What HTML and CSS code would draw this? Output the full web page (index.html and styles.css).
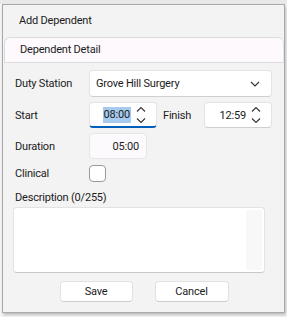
FILE: index.html
```html
<!DOCTYPE html>
<html>
<head>
<meta charset="utf-8">
<link rel="stylesheet" href="styles.css">
</head>
<body>
<div class="backdrop">
  <div class="dialog">
    <div class="title">Add Dependent</div>
    <div class="panel">Dependent Detail</div>
    <div class="content">
      <div class="row row-station">
        <span class="label">Duty Station</span>
        <div class="select">
          <span>Grove Hill Surgery</span>
          <svg class="chev" width="10" height="6" viewBox="0 0 10 6"><path d="M1 1 L5 5 L9 1" fill="none" stroke="#333" stroke-width="1.1"/></svg>
        </div>
      </div>
      <div class="row row-time">
        <span class="label">Start</span>
        <div class="time focused">
          <span class="val"><span class="sel">08:00</span></span>
          <svg class="spin" width="10" height="18" viewBox="0 0 10 18"><path d="M1 5.5 L5 1.5 L9 5.5" fill="none" stroke="#333" stroke-width="1.1"/><path d="M1 12.5 L5 16.5 L9 12.5" fill="none" stroke="#333" stroke-width="1.1"/></svg>
        </div>
        <span class="label-finish">Finish</span>
        <div class="time">
          <span class="val">12:59</span>
          <svg class="spin" width="10" height="18" viewBox="0 0 10 18"><path d="M1 5.5 L5 1.5 L9 5.5" fill="none" stroke="#333" stroke-width="1.1"/><path d="M1 12.5 L5 16.5 L9 12.5" fill="none" stroke="#333" stroke-width="1.1"/></svg>
        </div>
      </div>
      <div class="row row-duration">
        <span class="label">Duration</span>
        <div class="duration">05:00</div>
      </div>
      <div class="row row-clinical">
        <span class="label">Clinical</span>
        <div class="checkbox"></div>
      </div>
      <div class="desc-label">Description (0/255)</div>
      <div class="textarea"><div class="scroll"></div></div>
      <div class="buttons">
        <div class="btn btn-save">Save</div>
        <div class="btn btn-cancel">Cancel</div>
      </div>
    </div>
  </div>
</div>
</body>
</html>
```
FILE: styles.css
```css
html, body {
  margin: 0;
  padding: 0;
}
body {
  width: 287px;
  height: 317px;
  overflow: hidden;
  background: #f7f7f7;
  font-family: Roboto, "Noto Sans", sans-serif;
  font-size: 11px;
  letter-spacing: -0.2px;
  color: #1b1b1b;
}
.backdrop {
  padding: 4px 0 0 2px;
  background: linear-gradient(to bottom, #e9e9e9 0, #e9e9e9 4px, transparent 4px);
}
.dialog {
  width: 283px;
  height: 309px;
  box-sizing: border-box;
  border: 1px solid #a9a9a9;
  background: #f3f3f3;
  box-shadow: 1px 2px 3px rgba(0,0,0,0.25);
  display: flex;
  flex-direction: column;
}
.title {
  height: 32px;
  line-height: 31px;
  padding-left: 16px;
}
.panel {
  height: 26px;
  box-sizing: border-box;
  margin-left: 1px;
  border: 1px solid #dcdcdc;
  border-right-color: #e4e4e4;
  border-radius: 6px 6px 0 0;
  background: #fdf9fd;
  line-height: 24px;
  padding-left: 15px;
}
.content {
  padding: 7px 0 0 12px;
  display: flex;
  flex-direction: column;
}
.row {
  display: flex;
  align-items: center;
}
.label {
  width: 74px;
}
.select {
  width: 183px;
  height: 27px;
  box-sizing: border-box;
  background: #fff;
  border: 1px solid #e3e3e3;
  border-bottom-color: #cfcfcf;
  border-radius: 4px;
  display: flex;
  align-items: center;
  justify-content: space-between;
  padding: 0 11px 0 6px;
}
.chev {
  display: block;
}
.row-time {
  margin-top: 5px;
}
.time {
  width: 68px;
  height: 26px;
  box-sizing: border-box;
  background: #fff;
  border: 1px solid #e3e3e3;
  border-bottom-color: #cfcfcf;
  border-radius: 4px;
  display: flex;
  align-items: center;
  justify-content: flex-end;
  padding-right: 10px;
  gap: 5px;
}
.time.focused {
  border-bottom: 2px solid #005fb8;
}
.time.focused .spin {
  margin-top: 1px;
}
.val {
  display: flex;
  align-items: center;
}
.sel {
  background: #a6cbee;
  line-height: 16px;
  display: inline-block;
  padding: 0 1px;
}
.spin {
  display: block;
}
.label-finish {
  width: 41px;
  padding-left: 6px;
}
.row-duration {
  margin-top: 5px;
}
.duration {
  width: 58px;
  height: 26px;
  box-sizing: border-box;
  background: #fdfafd;
  border: 1px solid #e6e6e6;
  border-radius: 4px;
  display: flex;
  align-items: center;
  justify-content: flex-end;
  padding-right: 7px;
}
.row-clinical {
  margin-top: 6px;
}
.checkbox {
  width: 17px;
  height: 17px;
  box-sizing: border-box;
  border: 1px solid #9a9a9a;
  border-radius: 4px;
  background: #fff;
}
.desc-label {
  margin-top: 8px;
  height: 16px;
  line-height: 16px;
}
.textarea {
  margin-top: 1px;
  margin-left: -2px;
  width: 252px;
  height: 66px;
  box-sizing: border-box;
  background: #fff;
  border: 1px solid #e3e3e3;
  border-bottom-color: #c8c8c8;
  border-radius: 4px;
  display: flex;
  justify-content: flex-end;
  padding: 2px 2px 2px 0;
}
.scroll {
  width: 16px;
  background: #f8f8f8;
}
.buttons {
  margin-top: 8px;
  margin-left: -12px;
  display: flex;
  justify-content: center;
  gap: 22px;
  padding-left: 1px;
}
.btn {
  width: 73px;
  height: 21px;
  box-sizing: border-box;
  background: #fff;
  border: 1px solid #e2e2e2;
  border-bottom-color: #cdcdcd;
  border-radius: 4px;
  text-align: center;
  line-height: 19px;
}
.btn-cancel {
  width: 74px;
}
```
